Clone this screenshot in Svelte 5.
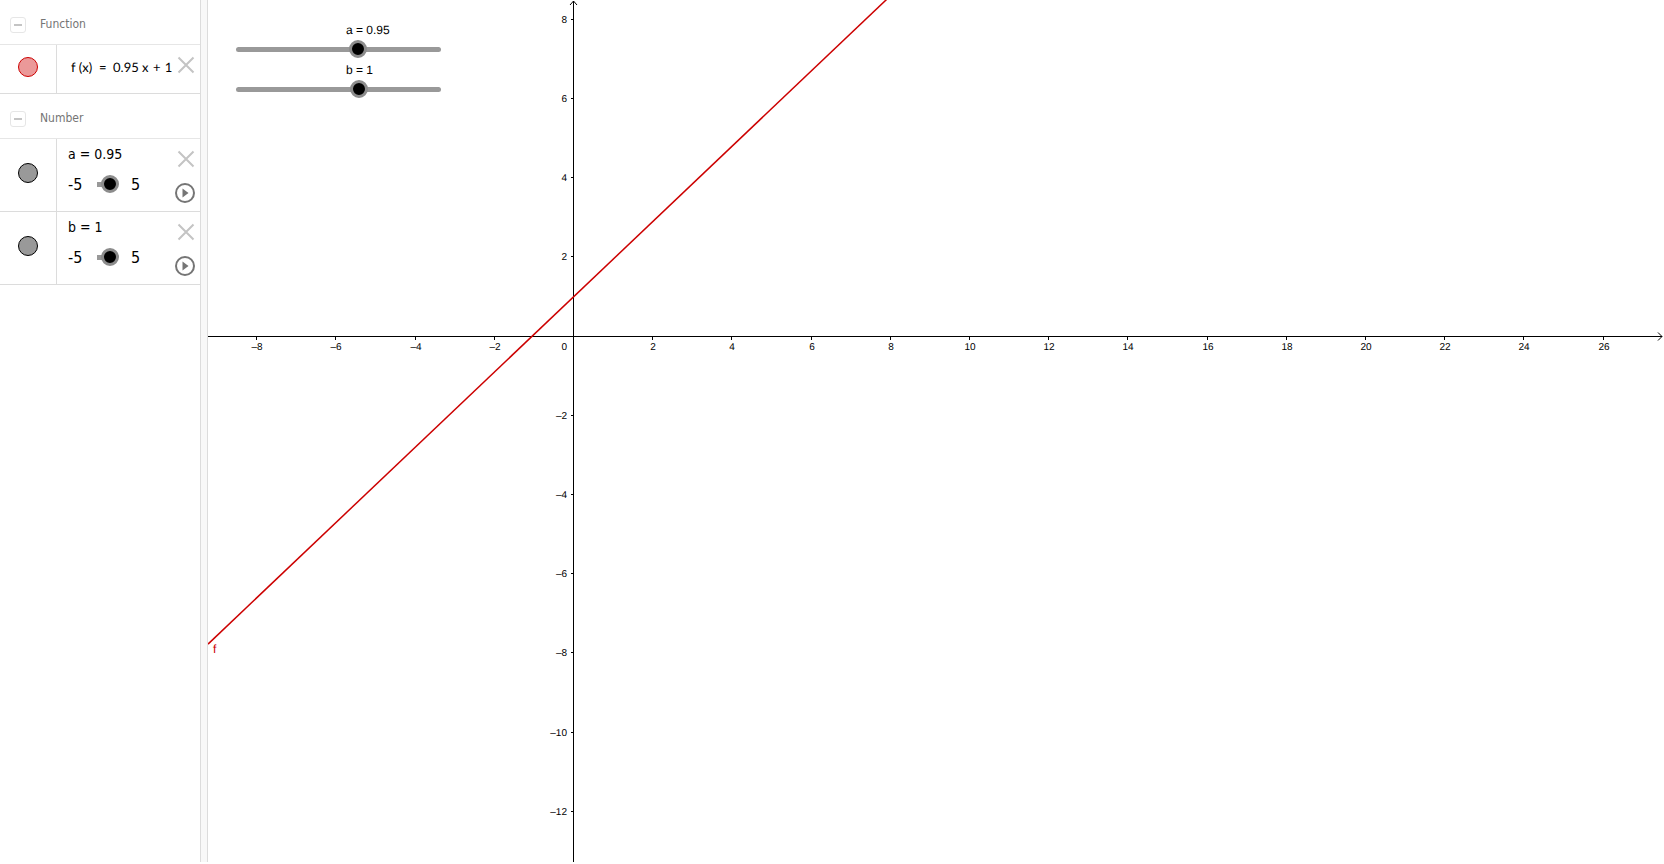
<script>
    const UNIT = 39.6;
    const ORIGIN_X = 366;
    const ORIGIN_Y = 336;

    let numbers = [
        { name: 'a', value: 0.95, min: -5, max: 5, step: 0.05 },
        { name: 'b', value: 1, min: -5, max: 5, step: 0.05 }
    ];

    let width = 1456;
    let height = 862;

    const toX = x => ORIGIN_X + x * UNIT;
    const toY = y => ORIGIN_Y - y * UNIT;
    const label = n => (n < 0 ? '–' : '') + Math.abs(n);

    function evens(from, to) {
        const list = [];
        for (let n = Math.ceil(from / 2) * 2; n <= to; n += 2) {
            if (n !== 0) list.push(n);
        }
        return list;
    }

    $: a = numbers[0].value;
    $: b = numbers[1].value;
    $: minX = -ORIGIN_X / UNIT;
    $: maxX = (width - ORIGIN_X) / UNIT;
    $: xTicks = evens(minX, maxX - 0.5);
    $: yTicks = evens((ORIGIN_Y - height) / UNIT, ORIGIN_Y / UNIT - 0.2);
</script>

<main class="app">
    <aside class="algebra">
        <section>
            <header>
                <button class="collapse" aria-label="Collapse Function"></button>
                <h2>Function</h2>
            </header>
            <div class="row">
                <div class="marble-cell">
                    <button class="marble red" aria-label="Show or hide f"></button>
                </div>
                <div class="formula">f&emsp14;(x) &nbsp;=&nbsp; {a} x&emsp13;+&emsp13;{b}</div>
                <div class="tools">
                    <button class="tool" aria-label="Delete f">
                        <svg width="20" height="20" viewBox="0 0 20 20"><path class="cross" d="M3.5 2.5 L18.5 17.5 M18.5 2.5 L3.5 17.5" /></svg>
                    </button>
                </div>
            </div>
        </section>

        <section>
            <header>
                <button class="collapse" aria-label="Collapse Number"></button>
                <h2>Number</h2>
            </header>
            {#each numbers as n}
            <div class="row tall">
                <div class="marble-cell">
                    <button class="marble" aria-label="Show or hide {n.name}"></button>
                </div>
                <div class="number">
                    <label for="side-{n.name}">{n.name} = {n.value}</label>
                    <div class="range">
                        <span class="min">{n.min}</span>
                        <input id="side-{n.name}" type="range" min={n.min} max={n.max} step={n.step} bind:value={n.value}>
                        <span>{n.max}</span>
                    </div>
                </div>
                <div class="tools">
                    <button class="tool" aria-label="Delete {n.name}">
                        <svg width="20" height="20" viewBox="0 0 20 20"><path class="cross" d="M3.5 2.5 L18.5 17.5 M18.5 2.5 L3.5 17.5" /></svg>
                    </button>
                    <button class="tool" aria-label="Play {n.name}">
                        <svg width="20" height="20" viewBox="0 0 20 20">
                            <circle class="ring" cx="10" cy="10" r="9" />
                            <path class="play" d="M7.5 5.5 L13.5 10 L7.5 14.5 Z" />
                        </svg>
                    </button>
                </div>
            </div>
            {/each}
        </section>
    </aside>

    <div class="divider"></div>

    <div class="graph" bind:clientWidth={width} bind:clientHeight={height}>
        <svg class="plane" {width} {height}>
            <g class="axes">
                <path d="M0 {ORIGIN_Y + 0.5} H{width - 2} M{width - 6} {ORIGIN_Y - 3.5} l4 4 l-4 4" />
                <path d="M{ORIGIN_X - 0.5} {height} V1 M{ORIGIN_X - 4} 5 l3.5 -4 l3.5 4" />
                {#each xTicks as t}
                <path d="M{Math.round(toX(t)) - 0.5} {ORIGIN_Y} v4" />
                {/each}
                {#each yTicks as t}
                <path d="M{ORIGIN_X - 3} {Math.floor(toY(t)) + 0.5} h3" />
                {/each}
            </g>
            <g class="labels">
                {#each xTicks as t}
                <text x={Math.round(toX(t))} y={ORIGIN_Y + 14} text-anchor="middle">{label(t)}</text>
                {/each}
                {#each yTicks as t}
                <text x={ORIGIN_X - 7} y={Math.floor(toY(t)) + 4} text-anchor="end">{label(t)}</text>
                {/each}
                <text x={ORIGIN_X - 7} y={ORIGIN_Y + 14} text-anchor="end">0</text>
            </g>
            <line class="plot" x1={toX(minX)} y1={toY(a * minX + b)} x2={toX(maxX)} y2={toY(a * maxX + b)} />
            <text class="plot-name" x="5" y={Math.round(toY(a * minX + b)) + 9}>f</text>
        </svg>

        <div class="sliders">
            {#each numbers as n}
            <div class="slider">
                <label for="graph-{n.name}">{n.name} = {n.value}</label>
                <input id="graph-{n.name}" type="range" min={n.min} max={n.max} step={n.step} bind:value={n.value}>
            </div>
            {/each}
        </div>
    </div>
</main>

<style>
    :global(body) {
        background: #fff;
    }

    .app {
        display: flex;
        box-sizing: border-box;
        height: 100vh;
        padding-bottom: 2px;
        overflow: hidden;
        color: #000;
    }

    .algebra {
        width: 200px;
        flex: none;
        font-family: "DejaVu Sans Condensed", "DejaVu Sans", sans-serif;
    }

    header {
        display: flex;
        align-items: center;
        gap: 14px;
        height: 44px;
        padding: 0 10px;
        border-bottom: 1px solid #e6e6e6;
    }

    h2 {
        margin: 4px 0 0;
        font-size: 12px;
        font-weight: normal;
        line-height: 20px;
        color: #757575;
    }

    button {
        padding: 0;
        border: 0;
        background: none;
        cursor: pointer;
    }

    .collapse {
        display: flex;
        align-items: center;
        justify-content: center;
        box-sizing: border-box;
        width: 16px;
        height: 16px;
        margin-top: 6px;
        border: 1px solid #e6e6e6;
        border-radius: 3px;
    }

    .collapse::before {
        content: "";
        width: 8px;
        height: 2px;
        background: #c4c4c4;
    }

    .row {
        display: flex;
        height: 48px;
        border-bottom: 1px solid #dcdcdc;
    }

    .tall {
        height: 72px;
    }

    .marble-cell {
        display: flex;
        align-items: center;
        justify-content: center;
        box-sizing: border-box;
        width: 57px;
        padding-bottom: 4px;
        border-right: 1px solid #dcdcdc;
    }

    .marble {
        width: 20px;
        height: 20px;
        border: 1px solid #000;
        border-radius: 50%;
        background: #999;
    }

    .red {
        border-color: #c00;
        background: #eb9999;
    }

    .formula {
        flex: 1;
        padding-left: 14px;
        font: 13px/45px Lato, sans-serif;
        white-space: nowrap;
        text-rendering: geometricPrecision;
    }

    .number {
        flex: 1;
        padding: 5px 0 0 11px;
        font-size: 14px;
        line-height: 20px;
    }

    .number label {
        display: block;
    }

    .range {
        display: flex;
        align-items: center;
        height: 20px;
        margin-top: 11px;
        font-size: 16px;
    }

    .min {
        width: 29px;
    }

    .range input {
        width: 22px;
        height: 20px;
        margin: 0 12px 2px 0;
    }

    .tools {
        display: flex;
        flex-direction: column;
        gap: 14px;
        width: 25px;
        padding-top: 10px;
    }

    .tool {
        display: flex;
        width: 20px;
        height: 20px;
    }

    .cross {
        fill: none;
        stroke: #c4c4c4;
        stroke-width: 2;
    }

    .ring {
        fill: none;
        stroke: #757575;
        stroke-width: 2;
    }

    .play {
        fill: #757575;
    }

    .divider {
        width: 6px;
        flex: none;
        border: solid #dcdcdc;
        border-width: 0 1px;
        background: #f8f8f8;
    }

    .graph {
        position: relative;
        flex: 1;
        min-width: 0;
        overflow: hidden;
        font-family: "Liberation Sans", Arial, sans-serif;
        text-rendering: geometricPrecision;
    }

    .plane {
        display: block;
        position: absolute;
    }

    .axes path {
        fill: none;
        stroke: #000;
        stroke-width: 1;
    }

    .labels {
        font-size: 10px;
    }

    .plot {
        stroke: #c00;
        stroke-width: 1.5;
    }

    .plot-name {
        font-size: 12px;
        fill: #c00;
    }

    .sliders {
        position: absolute;
        top: 23px;
        left: 28px;
        width: 205px;
    }

    .slider {
        height: 40px;
    }

    .slider label {
        display: block;
        padding-left: 110px;
        font-size: 12px;
        line-height: 14px;
    }

    .slider input {
        width: 100%;
        margin-top: 3px;
    }

    input {
        appearance: none;
        display: block;
        height: 18px;
        margin: 0;
        background: none;
    }

    input::-webkit-slider-runnable-track {
        height: 5px;
        border-radius: 3px;
        background: #999;
    }

    .range input::-webkit-slider-runnable-track {
        border-radius: 0;
        background: linear-gradient(to right, #999 12px, transparent 12px);
    }

    input::-webkit-slider-thumb {
        appearance: none;
        box-sizing: border-box;
        width: 18px;
        height: 18px;
        margin: -7px 0 0 2px;
        border: 3px solid #8c8c8c;
        border-radius: 50%;
        background: #000;
    }
</style>
